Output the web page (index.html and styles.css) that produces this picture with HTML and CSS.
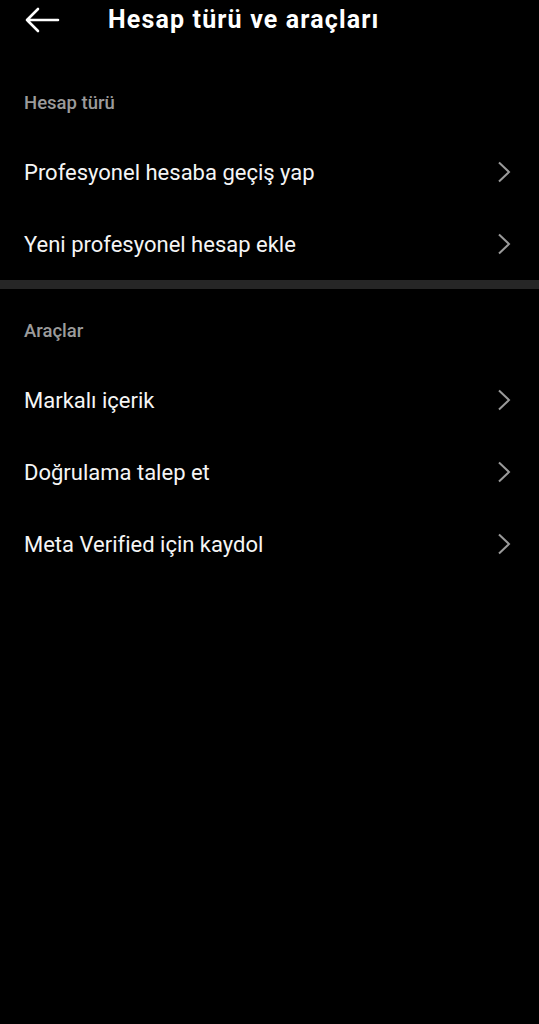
FILE: index.html
```html
<!DOCTYPE html>
<html lang="tr">
<head>
<meta charset="utf-8">
<title>Hesap türü ve araçları</title>
<link rel="stylesheet" href="styles.css">
</head>
<body>
<header class="topbar">
  <svg class="back" width="36" height="26" viewBox="0 0 36 26" aria-hidden="true">
    <path d="M34 13H3M14 2L3 13l11 11" fill="none" stroke="#fff" stroke-width="2.6" stroke-linecap="round" stroke-linejoin="round"/>
  </svg>
  <h1 class="title">Hesap türü ve araçları</h1>
</header>

<section class="group first">
  <div class="label">Hesap türü</div>
  <div class="row"><span>Profesyonel hesaba geçiş yap</span><svg class="chev" width="14" height="22" viewBox="0 0 14 22"><path d="M2 1.5l10 9.5-10 9.5" fill="none" stroke="#9a9a9a" stroke-width="2"/></svg></div>
  <div class="row"><span>Yeni profesyonel hesap ekle</span><svg class="chev" width="14" height="22" viewBox="0 0 14 22"><path d="M2 1.5l10 9.5-10 9.5" fill="none" stroke="#9a9a9a" stroke-width="2"/></svg></div>
</section>

<div class="divider"></div>

<section class="group">
  <div class="label">Araçlar</div>
  <div class="row"><span>Markalı içerik</span><svg class="chev" width="14" height="22" viewBox="0 0 14 22"><path d="M2 1.5l10 9.5-10 9.5" fill="none" stroke="#9a9a9a" stroke-width="2"/></svg></div>
  <div class="row"><span>Doğrulama talep et</span><svg class="chev" width="14" height="22" viewBox="0 0 14 22"><path d="M2 1.5l10 9.5-10 9.5" fill="none" stroke="#9a9a9a" stroke-width="2"/></svg></div>
  <div class="row"><span>Meta Verified için kaydol</span><svg class="chev" width="14" height="22" viewBox="0 0 14 22"><path d="M2 1.5l10 9.5-10 9.5" fill="none" stroke="#9a9a9a" stroke-width="2"/></svg></div>
</section>
</body>
</html>
```

FILE: styles.css
```css
html, body {
  margin: 0;
  padding: 0;
  background: #000;
  color: #f5f5f5;
  font-family: Roboto, "Noto Sans", "Liberation Sans", sans-serif;
  width: 539px;
  height: 1024px;
  overflow: hidden;
}

.topbar {
  height: 40px;
  display: flex;
  align-items: center;
  padding-left: 24px;
}

.back {
  display: block;
  flex: none;
}

.title {
  margin: 0 0 0 48px;
  font-size: 25px;
  font-weight: 700;
  color: #fff;
  line-height: 40px;
  letter-spacing: 1.15px;
}

.group {
  display: flex;
  flex-direction: column;
}

.group.first {
  margin-top: 21px;
}

.label {
  padding: 32px 24px 23px;
  font-size: 18.5px;
  line-height: 20px;
  color: #9b9b9b;
  font-weight: 500;
}

.row {
  height: 72px;
  display: flex;
  align-items: center;
  justify-content: space-between;
  padding: 0 28px 0 24px;
  font-size: 22px;
  color: #f5f5f5;
}

.chev {
  display: block;
  flex: none;
}

.divider {
  height: 9px;
  background: #262626;
}
```
